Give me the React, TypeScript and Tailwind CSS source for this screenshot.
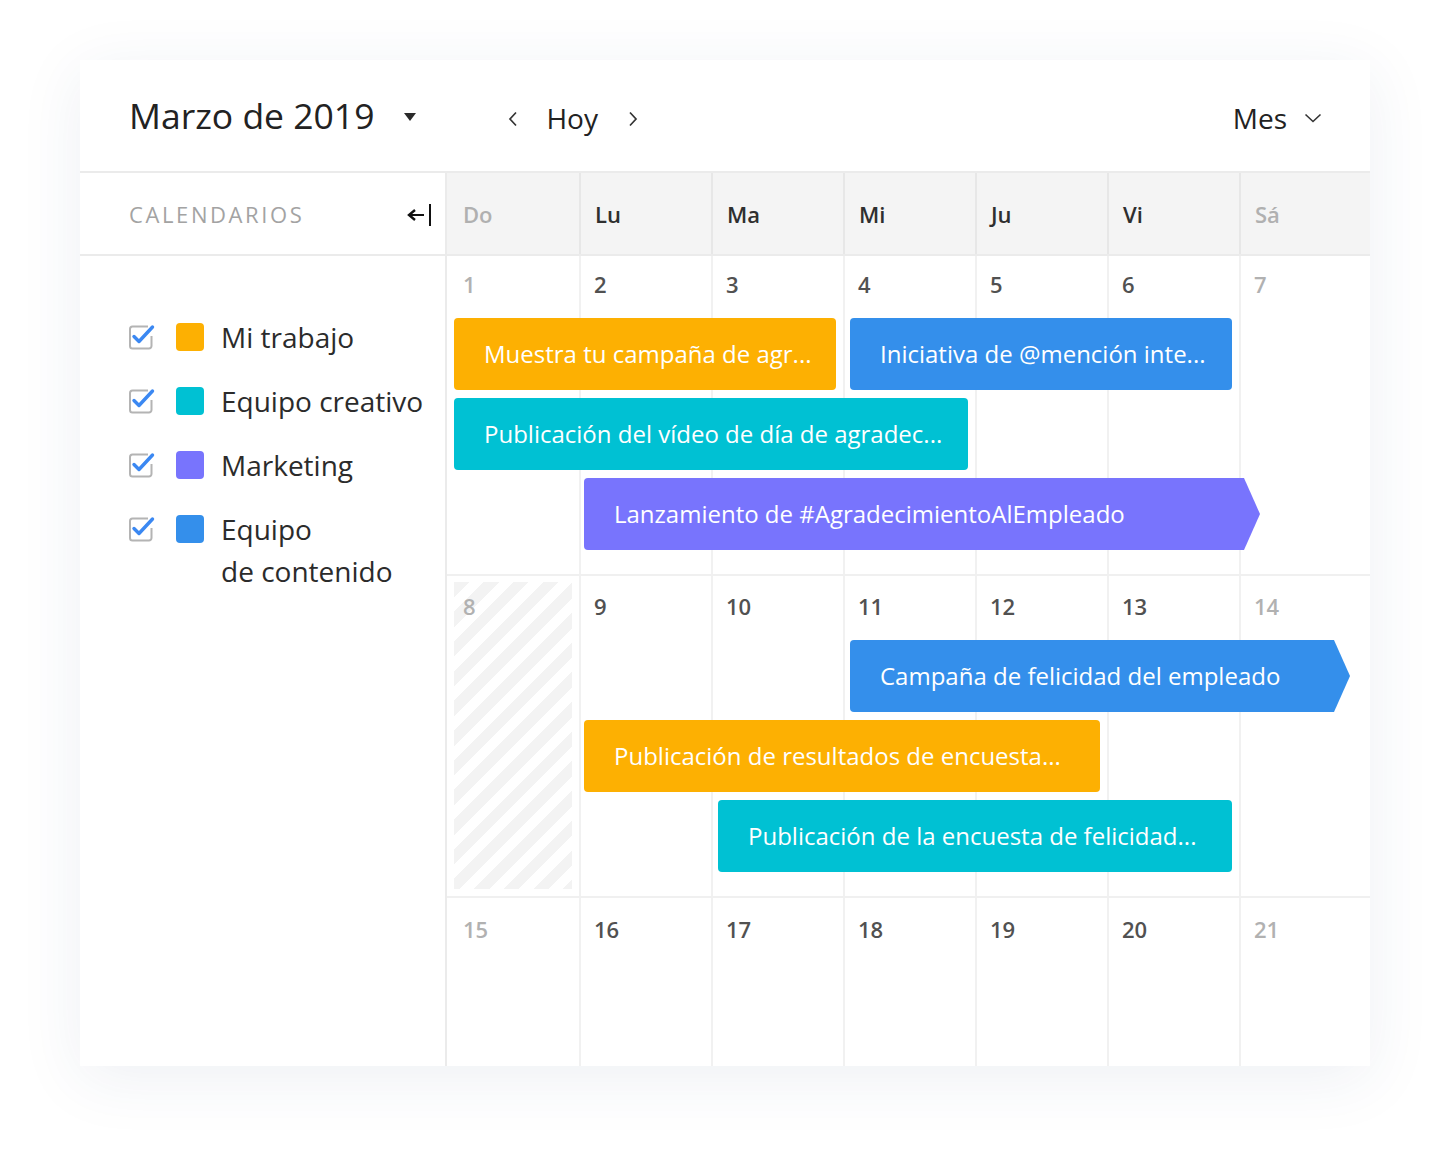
import React from "react";

type Ev = {
  label: string;
  cell: string; // grid placement
  box: string; // size, offset and colour
  arrow?: boolean;
};

type Week = {
  days: number[];
  rows: Ev[][];
  hatchFirst?: boolean;
  height: string;
  numPad: string;
  last?: boolean;
};

const ORANGE = "bg-[#fdb002]";
const TEAL = "bg-[#00c1d3]";
const PURPLE = "bg-[#7874fd]";
const BLUE = "bg-[#348feb]";

const weeks: Week[] = [
  {
    days: [1, 2, 3, 4, 5, 6, 7],
    height: "h-[320px]",
    numPad: "pt-[13px]",
    rows: [
      [
        {
          label: "Muestra tu campaña de agr...",
          cell: "col-start-1 col-span-3",
          box: `${ORANGE} ml-[7px] w-[382px]`,
        },
        {
          label: "Iniciativa de @mención inte...",
          cell: "col-start-4 col-span-3",
          box: `${BLUE} ml-[7px] w-[382px]`,
        },
      ],
      [
        {
          label: "Publicación del vídeo de día de agradec...",
          cell: "col-start-1 col-span-4",
          box: `${TEAL} ml-[7px] w-[514px]`,
        },
      ],
      [
        {
          label: "Lanzamiento de #AgradecimientoAlEmpleado",
          cell: "col-start-2 col-span-6",
          box: `${PURPLE} ml-[5px] w-[676px]`,
          arrow: true,
        },
      ],
    ],
  },
  {
    days: [8, 9, 10, 11, 12, 13, 14],
    height: "h-[322px]",
    numPad: "pt-[15px]",
    hatchFirst: true,
    rows: [
      [
        {
          label: "Campaña de felicidad del empleado",
          cell: "col-start-4 col-span-4",
          box: `${BLUE} ml-[7px] w-[500px]`,
          arrow: true,
        },
      ],
      [
        {
          label: "Publicación de resultados de encuesta...",
          cell: "col-start-2 col-span-4",
          box: `${ORANGE} ml-[5px] w-[516px]`,
        },
      ],
      [
        {
          label: "Publicación de la encuesta de felicidad...",
          cell: "col-start-3 col-span-4",
          box: `${TEAL} ml-[7px] w-[514px]`,
        },
      ],
    ],
  },
  {
    days: [15, 16, 17, 18, 19, 20, 21],
    height: "flex-1",
    numPad: "pt-[16px]",
    rows: [],
    last: true,
  },
];

const weekdays = ["Do", "Lu", "Ma", "Mi", "Ju", "Vi", "Sá"];

const calendars = [
  { name: ["Mi trabajo"], color: ORANGE },
  { name: ["Equipo creativo"], color: TEAL },
  { name: ["Marketing"], color: PURPLE },
  { name: ["Equipo", "de contenido"], color: BLUE },
];

const COLS = "grid grid-cols-[repeat(6,132px)_1fr]";

function CheckIcon() {
  return (
    <svg width="28" height="28" viewBox="0 0 28 28" className="shrink-0">
      <path
        d="M20 3.5 H4.5 a2.5 2.5 0 0 0 -2.5 2.5 V23 a2.5 2.5 0 0 0 2.5 2.5 H21 a2.5 2.5 0 0 0 2.5 -2.5 V13"
        fill="none"
        stroke="#b4b4b4"
        strokeWidth="2"
      />
      <path
        d="M6 13.5 L11 18.5 L24.5 4"
        fill="none"
        stroke="#3b88f2"
        strokeWidth="3.4"
        strokeLinecap="round"
        strokeLinejoin="round"
      />
    </svg>
  );
}

function EventBar({ ev }: { ev: Ev }) {
  return (
    <div className={ev.cell}>
      <div
        className={`${ev.box} h-[72px] flex items-center pl-[30px] text-white text-[24px] whitespace-nowrap overflow-hidden ${
          ev.arrow
            ? "rounded-[4px] [clip-path:polygon(0_0,calc(100%_-_16px)_0,100%_50%,calc(100%_-_16px)_100%,0_100%)]"
            : "rounded-[4px]"
        }`}
      >
        {ev.label}
      </div>
    </div>
  );
}

function WeekRow({ week }: { week: Week }) {
  return (
    <div
      className={`relative ${week.height} ${
        week.last ? "" : "border-b-2 border-[#f0f0f0]"
      }`}
    >
      {/* column lines and the hatched out-of-range day */}
      <div className={`absolute inset-0 ${COLS}`}>
        {week.days.map((d, i) => (
          <div
            key={d}
            className={`h-full ${i > 0 ? "border-l-2 border-[#f1f1f1]" : ""} ${
              i === 0 && week.hatchFirst ? "p-[6px_7px_7px_7px]" : ""
            }`}
          >
            {i === 0 && week.hatchFirst && (
              <div className="w-full h-full bg-[repeating-linear-gradient(135deg,#f3f3f3_0px,#f3f3f3_11px,#ffffff_11px,#ffffff_21px)]" />
            )}
          </div>
        ))}
      </div>

      <div className="relative">
        <div className={`${COLS} ${week.numPad}`}>
          {week.days.map((d, i) => {
            const weekend = i === 0 || i === 6;
            return (
              <div
                key={d}
                className={`${i === 0 ? "pl-[16px]" : "pl-[15px]"} text-[22px] leading-[30px] font-semibold ${
                  weekend ? "text-[#b1b1b1]" : "text-[#515151]"
                }`}
              >
                {d}
              </div>
            );
          })}
        </div>
        {week.rows.length > 0 && (
          <div className="mt-[19px] flex flex-col gap-[8px]">
            {week.rows.map((row, r) => (
              <div key={r} className={COLS}>
                {row.map((ev) => (
                  <EventBar key={ev.label} ev={ev} />
                ))}
              </div>
            ))}
          </div>
        )}
      </div>
    </div>
  );
}

export default function App() {
  return (
    <div className="w-[1452px] h-[1166px] bg-white pt-[60px] pl-[80px] font-['Open_Sans',sans-serif]">
      <div className="w-[1290px] h-[1006px] bg-white flex flex-col shadow-[0_12px_60px_rgba(40,60,110,0.08)]">
        {/* toolbar */}
        <div className="h-[113px] shrink-0 flex items-center pl-[49px] pr-[48px] border-b-2 border-[#ebebeb] text-[#222]">
          <span className="text-[35.5px] leading-none">Marzo de 2019</span>
          <svg width="12" height="8" viewBox="0 0 12 8" className="ml-[30px] mt-[2px]">
            <polygon points="0,0 12,0 6,8" fill="#2a2a2a" />
          </svg>
          <svg width="10" height="16" viewBox="0 0 10 16" className="ml-[92px] mt-[6px]">
            <path d="M8 1.5 L2 8 L8 14.5" fill="none" stroke="#333" strokeWidth="1.7" />
          </svg>
          <span className="ml-[28px] mt-[5px] text-[28px] leading-none">Hoy</span>
          <svg width="10" height="16" viewBox="0 0 10 16" className="ml-[30px] mt-[6px]">
            <path d="M2 1.5 L8 8 L2 14.5" fill="none" stroke="#333" strokeWidth="1.7" />
          </svg>
          <span className="ml-auto mt-[4px] text-[28px] leading-none">Mes</span>
          <svg width="18" height="10" viewBox="0 0 18 10" className="ml-[17px] mt-[4px]">
            <path d="M1.5 1.5 L9 8.5 L16.5 1.5" fill="none" stroke="#333" strokeWidth="1.6" />
          </svg>
        </div>

        <div className="flex flex-1 min-h-0">
          {/* sidebar */}
          <div className="w-[367px] shrink-0 border-r-2 border-[#ebebeb] flex flex-col">
            <div className="h-[83px] shrink-0 border-b-2 border-[#ebebeb] flex items-center pl-[49px] pr-[13px] pt-[2px]">
              <span className="text-[22px] tracking-[2.6px] text-[#a3a3a3]">CALENDARIOS</span>
              <svg width="26" height="24" viewBox="0 0 26 24" className="ml-auto">
                <path d="M3 12 H18" stroke="#111" strokeWidth="2" />
                <path d="M9 7 L3 12 L9 17" fill="none" stroke="#111" strokeWidth="2.4" />
                <path d="M24 1 V23" stroke="#111" strokeWidth="2" />
              </svg>
            </div>
            <div className="pt-[60px] pl-[48px] flex flex-col gap-[22px]">
              {calendars.map((c) => (
                <div key={c.name.join(" ")} className="flex items-start">
                  <div className="h-[42px] flex items-center">
                    <CheckIcon />
                  </div>
                  <div className="h-[42px] flex items-center ml-[20px]">
                    <div className={`w-[28px] h-[28px] rounded-[4px] ${c.color}`} />
                  </div>
                  <div className="ml-[17px] text-[28px] leading-[42px] text-[#2b2b2b]">
                    {c.name.map((line) => (
                      <div key={line}>{line}</div>
                    ))}
                  </div>
                </div>
              ))}
            </div>
          </div>

          {/* month grid */}
          <div className="flex-1 flex flex-col min-w-0">
            <div className={`h-[83px] shrink-0 bg-[#f4f4f4] border-b-2 border-[#ebebeb] ${COLS}`}>
              {weekdays.map((w, i) => {
                const weekend = i === 0 || i === 6;
                return (
                  <div
                    key={w}
                    className={`flex items-center pt-[2px] text-[22px] font-semibold ${
                      i > 0 ? "border-l-2 border-[#e7e7e7] pl-[14px]" : "pl-[16px]"
                    } ${weekend ? "text-[#b0b0b0]" : "text-[#2f2f2f]"}`}
                  >
                    {w}
                  </div>
                );
              })}
            </div>
            {weeks.map((w) => (
              <WeekRow key={w.days[0]} week={w} />
            ))}
          </div>
        </div>
      </div>
    </div>
  );
}
